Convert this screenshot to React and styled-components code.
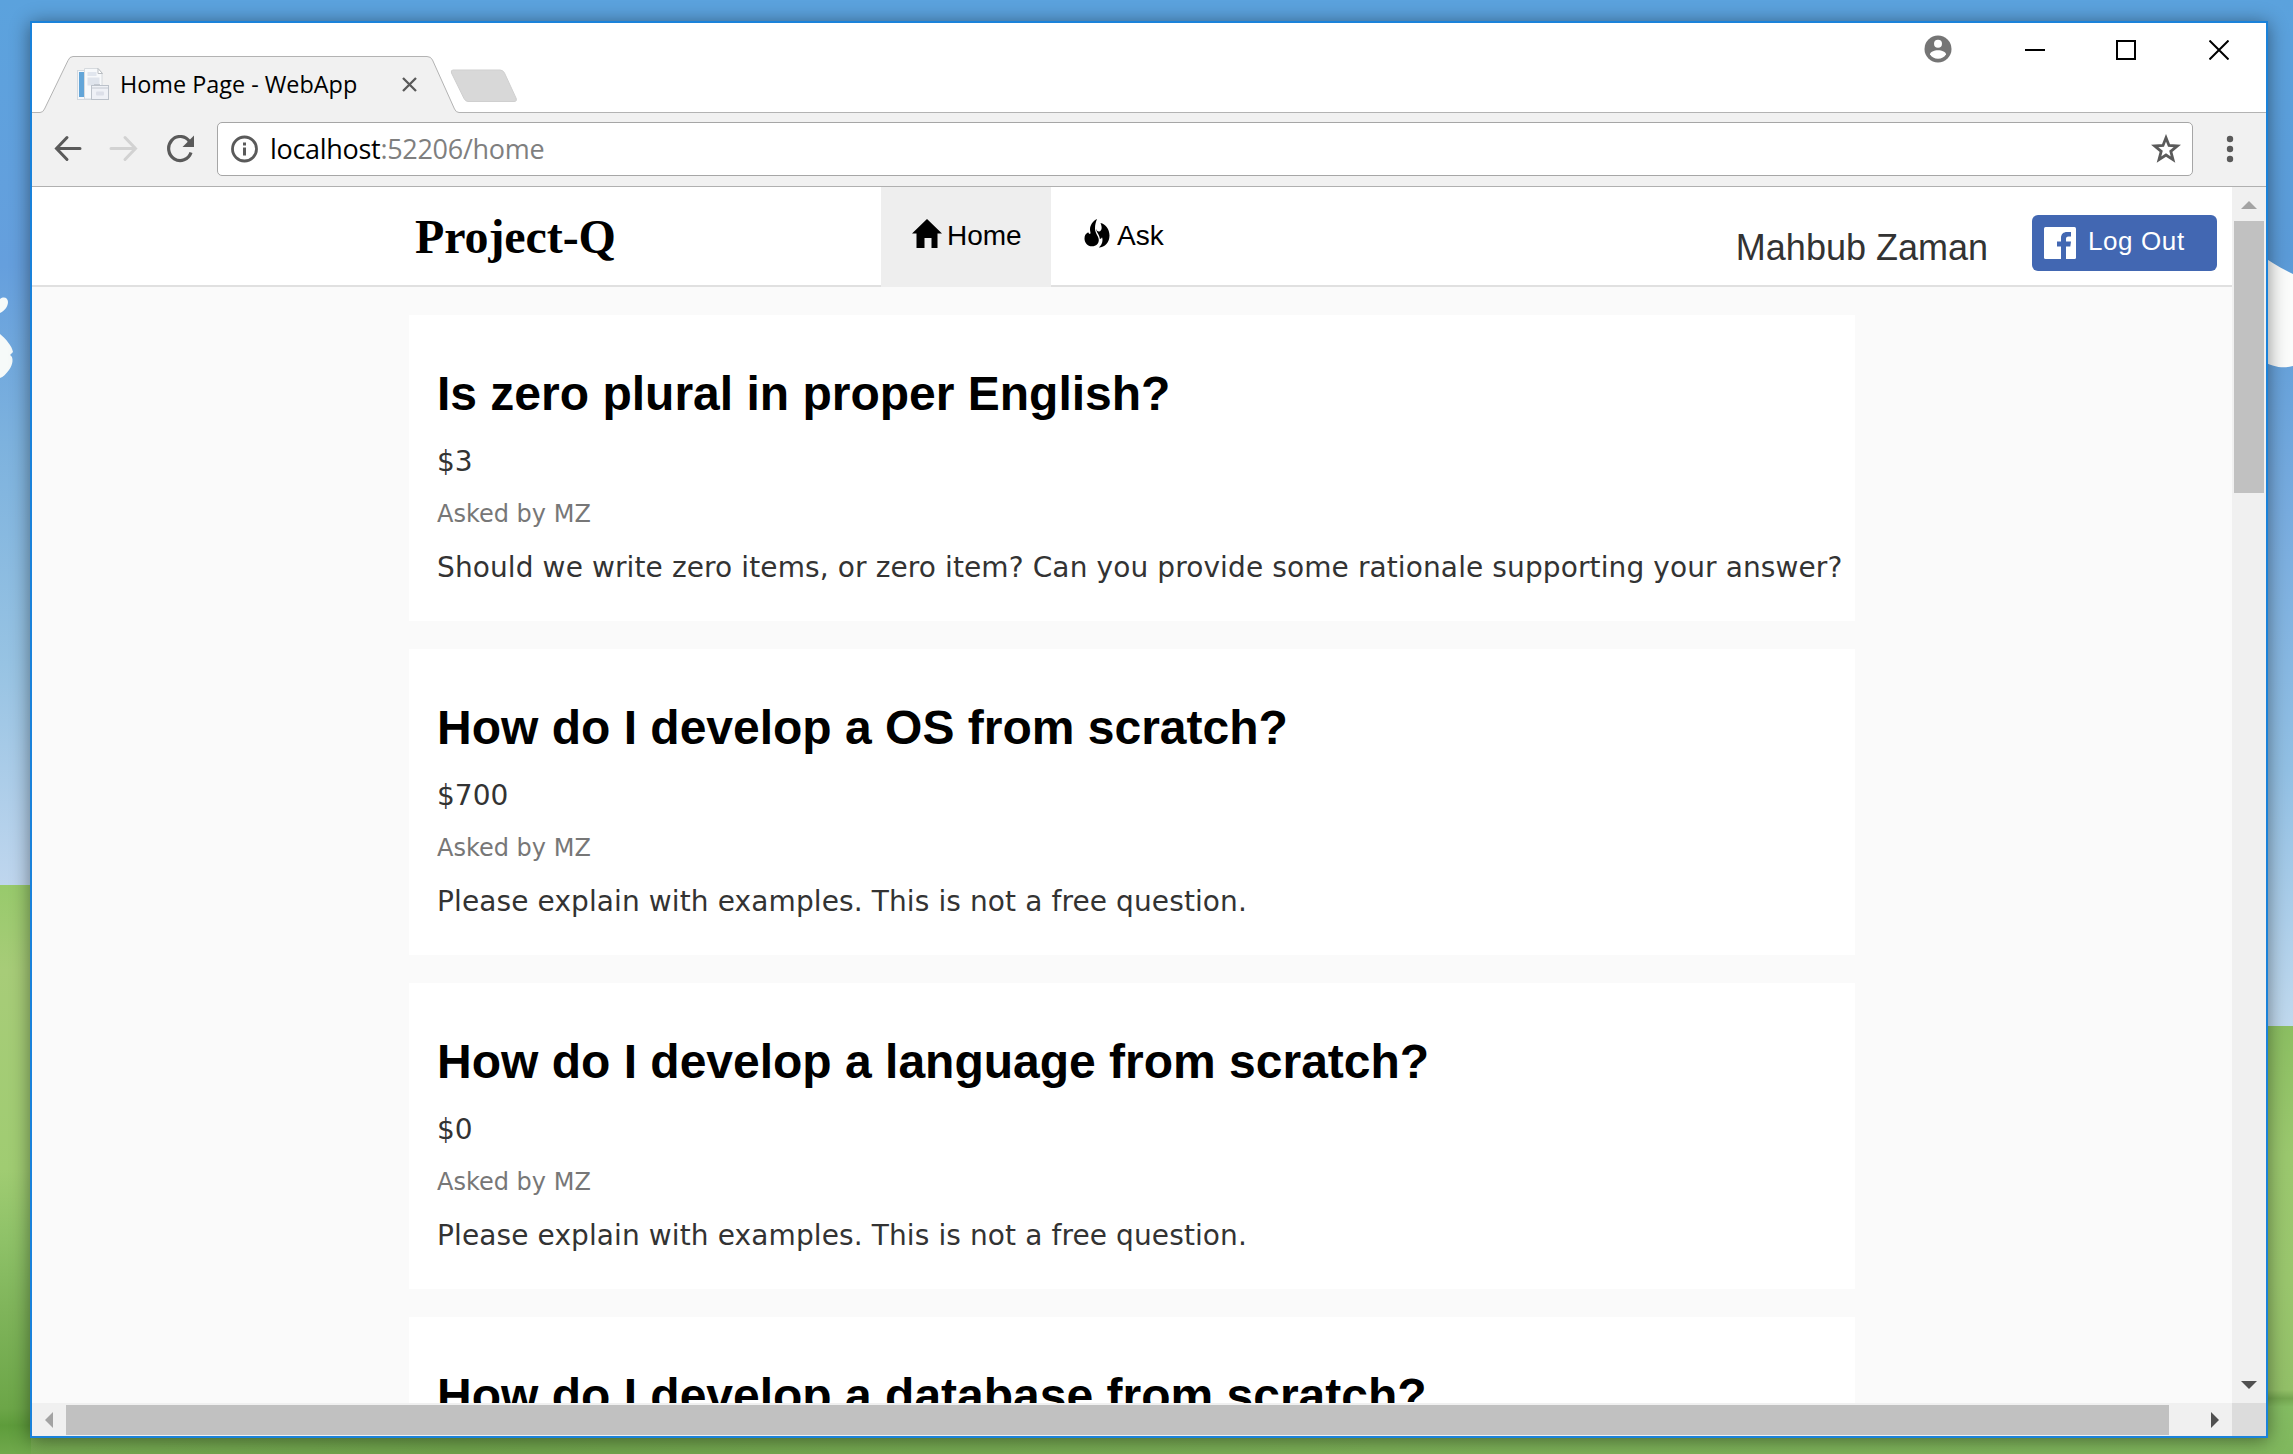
import React from 'react';
import styled, { createGlobalStyle } from 'styled-components';

const Global = createGlobalStyle`
  * { box-sizing: border-box; }
  html, body { margin: 0; padding: 0; overflow: hidden; }
  h1, h2, p { margin: 0; font-weight: normal; }
  svg { display: block; flex: none; }
`;

const ui = '"Open Sans", "Noto Sans", sans-serif';
const arial = '"Liberation Sans", Arial, sans-serif';
const verdana = '"DejaVu Sans", Verdana, sans-serif';

/* ---------- desktop ---------- */
const Desktop = styled.div`
  position: relative;
  width: 2293px;
  height: 1454px;
  padding: 21px 25px 16px 30px;
  overflow: hidden;
  background: linear-gradient(90deg, #76aa52 0, #70a44c 20%, #7cb057 60%, #80b75d 100%);
`;

const Wallpaper = styled.svg`
  position: absolute;
  inset: 0;
`;

const Window = styled.div`
  position: relative;
  width: 2238px;
  height: 1417px;
  display: flex;
  flex-direction: column;
  border: 2px solid #1a82da;
  background: #fff;
  box-shadow: 0 2px 18px rgba(0, 0, 0, 0.45);
`;

/* ---------- tab strip ---------- */
const TabStrip = styled.div`
  position: relative;
  height: 89px;
  flex: none;
  display: flex;
  justify-content: space-between;
`;

const TabOutline = styled.svg`
  position: absolute;
  left: 0;
  top: 0;
`;

const Tab = styled.div`
  position: relative;
  display: flex;
  align-items: center;
  width: 420px;
  height: 56px;
  margin-top: 33px;
  padding: 0 35px 0 44px;
`;

const TabTitle = styled.span`
  flex: 1;
  margin: 0 0 0 10px;
  font: 23.4px/32px ${ui};
  color: #000;
  white-space: nowrap;
`;

const WindowControls = styled.div`
  position: relative;
  display: flex;
  align-items: center;
  height: 54px;
  padding: 0 37px 0 0;
`;

const Control = styled.div`
  margin-left: ${(p) => p.$gap}px;
  margin-top: ${(p) => p.$drop || 0}px;
`;

/* ---------- toolbar ---------- */
const Toolbar = styled.div`
  display: flex;
  align-items: center;
  height: 75px;
  flex: none;
  padding: 0 32px 0 22px;
  background: #f1f1f1;
  border-bottom: 1px solid #b0b0b0;
`;

const NavButtons = styled.div`
  display: flex;
  gap: 27px;
  width: 163px;
`;

const AddressBar = styled.div`
  display: flex;
  align-items: center;
  width: 1976px;
  height: 54px;
  padding: 0 11px 0 12px;
  background: #fff;
  border: 1px solid #a6a6a6;
  border-radius: 5px;
`;

const Url = styled.span`
  flex: 1;
  margin: 0 0 0 10px;
  font: 27px/38px ${ui};
  letter-spacing: -0.3px;
  color: #7f7f7f;
  white-space: nowrap;
  b { font-weight: normal; color: #000; }
`;

const MenuSlot = styled.div`
  margin-left: 33px;
`;

/* ---------- scroll frame ---------- */
const Frame = styled.div`
  display: grid;
  grid-template: 1216px 33px / 2200px 34px;
  flex: none;
`;

const Page = styled.div`
  height: 1216px;
  overflow: hidden;
  background: #fafafa;
`;

const VScroll = styled.div`
  display: flex;
  flex-direction: column;
  justify-content: space-between;
  padding: 14px 2px;
  background: #f0f0f0;
`;

const VThumb = styled.div`
  height: 272px;
  margin: 12px 0 auto;
  background: #c1c1c1;
`;

const HScroll = styled.div`
  display: flex;
  align-items: center;
  padding: 0 13px;
  background: #f0f0f0;
`;

const HThumb = styled.div`
  width: 2103px;
  height: 30px;
  margin: 1px auto 0 13px;
  background: #c1c1c1;
`;

const Corner = styled.div`
  background: #dcdcdc;
`;

const Arrow = styled.svg`
  align-self: center;
  fill: ${(p) => p.$color};
`;

/* ---------- site header ---------- */
const Header = styled.header`
  display: flex;
  height: 100px;
  background: linear-gradient(#fff 98px, #e0e0e0 98px);
`;

const Brand = styled.h1`
  width: 849px;
  padding: 22px 0 0 383px;
  font: bold 48px/56px "Liberation Serif", "Times New Roman", serif;
  letter-spacing: -0.1px;
  color: #000;
`;

const NavItem = styled.a`
  display: flex;
  width: ${(p) => p.$width}px;
  height: 100px;
  padding: 32px 0 0 ${(p) => (p.$active ? 31 : 33)}px;
  background: ${(p) => (p.$active ? '#eeeeee' : 'transparent')};
  color: #000;
`;

const NavLabel = styled.span`
  margin-left: ${(p) => p.$gap}px;
  margin-top: 1px;
  font: 28px/32px ${arial};
`;

const User = styled.div`
  display: flex;
  margin-left: auto;
  padding-right: 15px;
`;

const UserName = styled.span`
  padding-top: 40px;
  font: 36px/42px ${arial};
  color: #333;
`;

const LogOut = styled.button`
  display: flex;
  align-items: center;
  width: 185px;
  height: 56px;
  margin: 28px 0 0 44px;
  padding: 0 0 0 12px;
  border: 0;
  border-radius: 6px;
  background: #4267b2;
  color: #fff;
  font: 26px/32px ${arial};
  letter-spacing: 0.6px;
  white-space: nowrap;
  span { margin: -4px 0 0 12px; }
`;

/* ---------- questions ---------- */
const Feed = styled.main`
  display: flex;
  flex-direction: column;
  gap: 28px;
  width: 1446px;
  margin: 28px 0 0 377px;
`;

const Card = styled.article`
  height: 306px;
  flex: none;
  padding: 50px 0 0 28px;
  background: #fff;
  white-space: nowrap;
`;

const Title = styled.h2`
  font: bold 48px/58px ${arial};
  color: #000;
`;

const Price = styled.p`
  margin-top: 19px;
  font: 28px/40px ${verdana};
  color: #333;
`;

const Author = styled.p`
  margin-top: 15px;
  font: 24px/34px ${verdana};
  color: #777;
`;

const Body = styled.p`
  margin-top: 17px;
  font: 28px/40px ${verdana};
  letter-spacing: 0.11px;
  color: #333;
`;

const questions = [
  { title: 'Is zero plural in proper English?', price: '$3', author: 'MZ', body: 'Should we write zero items, or zero item? Can you provide some rationale supporting your answer?' },
  { title: 'How do I develop a OS from scratch?', price: '$700', author: 'MZ', body: 'Please explain with examples. This is not a free question.' },
  { title: 'How do I develop a language from scratch?', price: '$0', author: 'MZ', body: 'Please explain with examples. This is not a free question.' },
  { title: 'How do I develop a database from scratch?' },
];

const Scenery = () => (
  <Wallpaper width="2293" height="1454">
    <defs>
      <linearGradient id="skyL" x1="0" y1="0" x2="0" y2="1">
        <stop offset="0" stopColor="#5ba2dd" />
        <stop offset="0.3" stopColor="#659fdd" />
        <stop offset="0.5" stopColor="#7db2de" />
        <stop offset="0.75" stopColor="#97c3e3" />
        <stop offset="1" stopColor="#bfd6ee" />
      </linearGradient>
      <linearGradient id="skyR" x1="0" y1="0" x2="0" y2="1">
        <stop offset="0" stopColor="#5ba2dd" />
        <stop offset="0.25" stopColor="#5b9bd8" />
        <stop offset="0.5" stopColor="#78acdf" />
        <stop offset="0.75" stopColor="#92c0e4" />
        <stop offset="1" stopColor="#c0d9ee" />
      </linearGradient>
      <linearGradient id="grassL" x1="0" y1="0" x2="0" y2="1">
        <stop offset="0" stopColor="#98ca6c" />
        <stop offset="0.15" stopColor="#a7cc78" />
        <stop offset="0.5" stopColor="#a0cc72" />
        <stop offset="0.62" stopColor="#8fc268" />
        <stop offset="0.75" stopColor="#7fb45a" />
        <stop offset="0.92" stopColor="#6ca648" />
        <stop offset="0.95" stopColor="#5e9c3b" />
        <stop offset="1" stopColor="#70a94c" />
      </linearGradient>
      <linearGradient id="grassR" x1="0" y1="0" x2="0" y2="1">
        <stop offset="0" stopColor="#8cbf62" />
        <stop offset="0.3" stopColor="#9bc86e" />
        <stop offset="0.6" stopColor="#9ac66d" />
        <stop offset="0.85" stopColor="#93c068" />
        <stop offset="0.87" stopColor="#74a650" />
        <stop offset="0.89" stopColor="#84bc62" />
        <stop offset="1" stopColor="#80b75d" />
      </linearGradient>
    </defs>
    <rect width="2293" height="22" fill="#5ba2dd" />
    <rect width="31" height="885" fill="url(#skyL)" />
    <rect y="885" width="31" height="569" fill="url(#grassL)" />
    <rect x="2267" width="26" height="1026" fill="url(#skyR)" />
    <rect x="2267" y="1026" width="26" height="428" fill="url(#grassR)" />
    <path d="M0 299c4-3 8-1 8 3 0 5-4 9-8 11zM0 334c6 5 12 12 13 18l-3 3c4 2 3 10-1 15-3 4-6 7-9 8z" fill="#f6faf9" />
    <path d="M2260 255c10 6 20 13 33 19v92c-10 3-20 1-33-6z" fill="#fbfcfb" />
  </Wallpaper>
);

const Favicon = () => (
  <svg width="34" height="34" viewBox="0 0 34 34">
    <rect x="1.5" y="3.5" width="22" height="29" fill="#f4f7fb" stroke="#d3d9df" />
    <rect x="3" y="5" width="5.500" height="25" fill="#62a5d8" />
    <path d="M8.500 1.500h13.500l4 4.500v26h-17.500z" fill="#f7f9fb" stroke="#d6dade" />
    <path d="M22 1.500v5h4.500z" fill="#fff" stroke="#b9bdc1" />
    <rect x="11.500" y="5" width="9" height="4" fill="#e1e6ee" />
    <rect x="11.500" y="10.500" width="12" height="8" fill="#dfe4ec" />
    <rect x="15.500" y="18.500" width="17" height="14" fill="#eff1f6" stroke="#bcc2ca" />
    <path d="M16 21h16M18 17.500h6" stroke="#c3c8d0" />
    <rect x="20" y="24.500" width="8" height="4" rx="1" fill="#dcdfe8" />
  </svg>
);

const TabShape = () => (
  <TabOutline width="2234" height="90">
    <path d="M0 89.500H8Q11 89.500 12.500 86L36 37.500Q37.500 33.500 41 33.500H395Q399 33.500 400.500 37L422.500 86Q424 89.500 427 89.500" fill="#f1f1f1" />
    <path d="M0 89.500H8Q11 89.500 12.500 86L36 37.500Q37.500 33.500 41 33.500H395Q399 33.500 400.500 37L422.500 86Q424 89.500 427 89.500H2234" fill="none" stroke="#b3b3b3" />
    <path d="M421 47H468Q471 47 472.500 50L484 75Q485.500 78.500 482 78.500H436Q433.500 78.500 432 75.500L419.500 50Q418.500 47 421 47Z" fill="#d8d8d8" stroke="#cfcfcf" />
  </TabOutline>
);

const Fire = () => (
  <svg width="26" height="29" viewBox="0 0 26 29">
    <path d="M13 0C9 2 6 6 6 10.500C6 12 6.500 13 6.500 14.300C6 15.500 5 14.800 4.200 13.300C1.500 14.500 0.500 17 0.500 19.500C0.500 23.500 3.500 27.300 8 27.300C12.300 27.300 14.800 24.500 14.800 21C14.800 17 11 14.500 11 9.500C11 5.500 11.800 3 13 0Z" />
    <path d="M16.500 4C21.500 5 25.500 10 25.500 16.500C25.500 23.500 21 28.300 14.800 28.500C17 26.500 18.500 24 18.500 21C18.500 20 18.300 19 18 18.300C17.500 19.500 16.800 20 15.900 20C15.500 15.500 12.300 13.500 12 9.500C12.500 11.500 13.800 12.800 15.200 12.500C17.800 12 18.500 8.500 16.500 4Z" />
  </svg>
);

export default function App() {
  return (
    <>
      <Global />
      <Desktop>
        <Scenery />
        <Window>
          <TabStrip>
            <TabShape />
            <Tab>
              <Favicon />
              <TabTitle>Home Page - WebApp</TabTitle>
              <svg width="15" height="15" viewBox="0 0 15 15" stroke="#5a5a5a" strokeWidth="2.300"><path d="M1 1L14 14M14 1L1 14" /></svg>
            </Tab>
            <WindowControls>
              <Control $gap={0} $drop={-2}>
                <svg width="28" height="28" viewBox="0 0 28 28">
                  <circle cx="14" cy="14" r="13.500" fill="#757575" />
                  <circle cx="14" cy="8.800" r="4" fill="#fff" />
                  <path d="M14 15.200C18 15.200 22 17 22 19.200C20.500 22 17.500 23.700 14 23.700S7.500 22 6 19.200C6 17 10 15.200 14 15.200Z" fill="#fff" />
                </svg>
              </Control>
              <Control $gap={73}><svg width="20" height="20"><path d="M0 10H20" stroke="#000" strokeWidth="2" /></svg></Control>
              <Control $gap={71}><svg width="20" height="20"><path d="M1 1H19V19H1Z" fill="none" stroke="#000" strokeWidth="2" /></svg></Control>
              <Control $gap={73}><svg width="20" height="20"><path d="M0.500 0.500L19.500 19.500M19.500 0.500L0.500 19.500" stroke="#000" strokeWidth="2" /></svg></Control>
            </WindowControls>
          </TabStrip>

          <Toolbar>
            <NavButtons>
              <svg width="28" height="28" viewBox="0 0 28 28" fill="none" stroke="#5a5a5a" strokeWidth="3" strokeLinecap="round"><path d="M2.500 13.500H26M13 2.500L2.500 13.500L13 24.500" /></svg>
              <svg width="30" height="28" viewBox="0 0 30 28" fill="none" stroke="#d2d2d2" strokeWidth="3" strokeLinecap="round"><path d="M2 13.500H26.500M16 2.500L26.500 13.500L16 24.500" /></svg>
              <svg width="30" height="28" viewBox="0 0 30 28"><path d="M23.500 6.500A11.500 12 0 1 0 25 17.500" fill="none" stroke="#5a5a5a" strokeWidth="3.200" /><path d="M28 0.500V12H16.500Z" fill="#5a5a5a" /></svg>
            </NavButtons>
            <AddressBar>
              <svg width="30" height="30" viewBox="0 0 30 30"><circle cx="14.500" cy="15" r="12" fill="none" stroke="#5a5a5a" strokeWidth="2.800" /><path d="M13 8.500H16V11.500H13ZM13 13.500H16V21.500H13Z" fill="#5a5a5a" /></svg>
              <Url><b>localhost</b>:52206/home</Url>
              <svg width="30" height="30" viewBox="0 0 30 30"><path d="M15 3.800L18 11.500L26.300 12L19.800 17.300L22 25.600L15 21L8 25.600L10.200 17.300L3.700 12L12 11.500Z" fill="none" stroke="#5a5a5a" strokeWidth="2.800" /></svg>
            </AddressBar>
            <MenuSlot>
              <svg width="8" height="28" viewBox="0 0 8 28" fill="#5a5a5a"><circle cx="4" cy="4" r="3.200" /><circle cx="4" cy="14" r="3.200" /><circle cx="4" cy="24" r="3.200" /></svg>
            </MenuSlot>
          </Toolbar>

          <Frame>
            <Page>
              <Header>
                <Brand>Project-Q</Brand>
                <NavItem $active $width={170}>
                  <svg width="30" height="29" viewBox="0 0 30 29"><path d="M15 0L30 14.500H25.500V29H19.500V19H12.500V29H4.500V14.500H0Z" /></svg>
                  <NavLabel $gap={5}>Home</NavLabel>
                </NavItem>
                <NavItem $width={130}>
                  <Fire />
                  <NavLabel $gap={7}>Ask</NavLabel>
                </NavItem>
                <User>
                  <UserName>Mahbub Zaman</UserName>
                  <LogOut>
                    <svg width="32" height="32" viewBox="0 0 32 32">
                      <rect width="32" height="32" rx="1.500" fill="#fff" />
                      <path d="M17 32V19.500H13V14.500H17V11C17 7 19.500 5 23 5H27V9.500H24.500C22.500 9.500 22 10.500 22 12V14.500H27L26.300 19.500H22V32Z" fill="#4267b2" />
                    </svg>
                    <span>Log Out</span>
                  </LogOut>
                </User>
              </Header>
              <Feed>
                {questions.map((q) => (
                  <Card key={q.title}>
                    <Title>{q.title}</Title>
                    {q.price && <Price>{q.price}</Price>}
                    {q.author && <Author>Asked by {q.author}</Author>}
                    {q.body && <Body>{q.body}</Body>}
                  </Card>
                ))}
              </Feed>
            </Page>
            <VScroll>
              <Arrow $color="#a3a3a3" width="16" height="8"><path d="M8 0L16 8H0Z" /></Arrow>
              <VThumb />
              <Arrow $color="#505050" width="16" height="8"><path d="M0 0H16L8 8Z" /></Arrow>
            </VScroll>
            <HScroll>
              <Arrow $color="#a3a3a3" width="8" height="16"><path d="M8 0V16L0 8Z" /></Arrow>
              <HThumb />
              <Arrow $color="#505050" width="8" height="16"><path d="M0 0L8 8L0 16Z" /></Arrow>
            </HScroll>
            <Corner />
          </Frame>
        </Window>
      </Desktop>
    </>
  );
}
